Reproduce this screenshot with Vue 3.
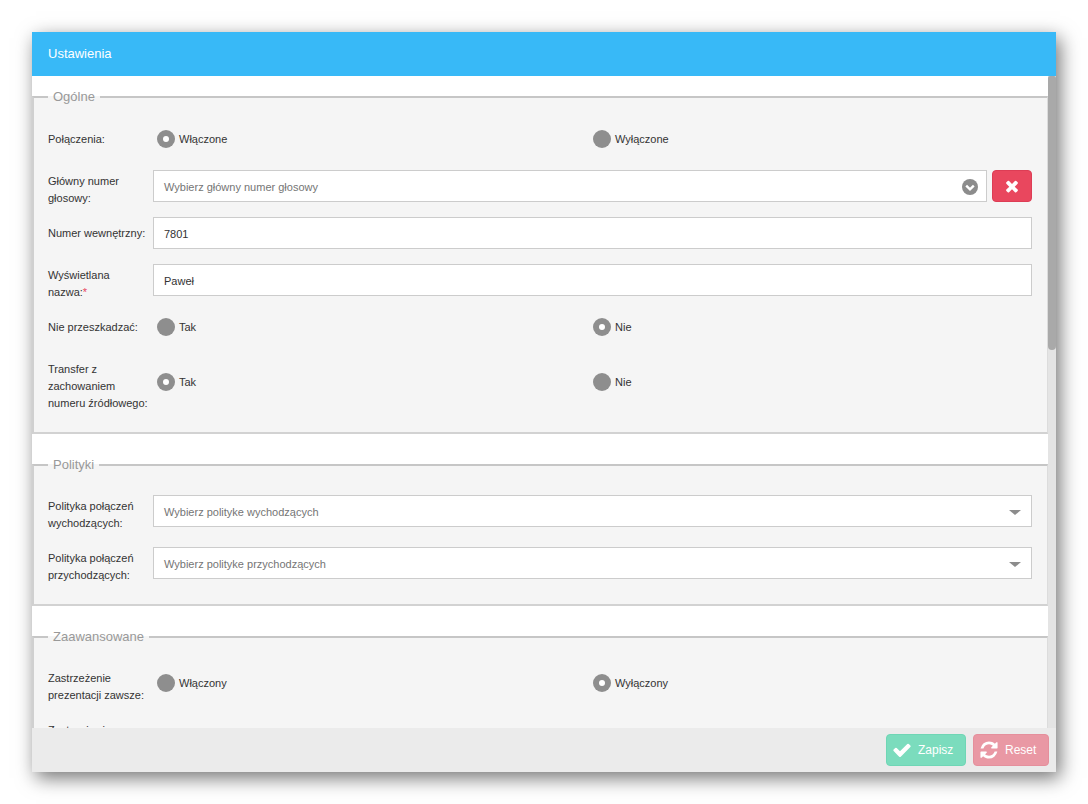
<script setup>
const check = 'M1671 566q0 40-28 68l-724 724-136 136q-28 28-68 28t-68-28l-136-136-362-362q-28-28-28-68t28-68l136-136q28-28 68-28t68 28l294 295 656-657q28-28 68-28t68 28l136 136q28 28 28 68z'
const times = 'M1298 1322q0 40-28 68l-136 136q-28 28-68 28t-68-28l-294-294-294 294q-28 28-68 28t-68-28l-136-136q-28-28-28-68t28-68l294-294-294-294q-28-28-28-68t28-68l136-136q28-28 68-28t68 28l294 294 294-294q28-28 68-28t68 28l136 136q28 28 28 68t-28 68l-294 294 294 294q28 28 28 68z'
const refresh = 'M1639 1056q0 5-1 7-64 268-268 434.5t-478 166.5q-146 0-282.5-55t-243.5-157l-129 129q-19 19-45 19t-45-19-19-45v-448q0-26 19-45t45-19h448q26 0 45 19t19 45-19 45l-137 137q71 66 161 102t187 36q134 0 250-65t186-179q11-17 53-117 8-23 30-23h192q13 0 22.5 9.5t9.5 22.5zm25-800v448q0 26-19 45t-45 19h-448q-26 0-45-19t-19-45 19-45l138-138q-148-137-349-137-134 0-250 65t-186 179q-11 17-53 117-8 23-30 23h-199q-13 0-22.5-9.5t-9.5-22.5v-7q65-268 270-434.5t480-166.5q146 0 284 55.5t245 156.5l130-129q19-19 45-19t45 19 19 45z'
</script>

<template>
  <div class="page">
    <section class="modal">
      <header class="head">Ustawienia</header>
      <div class="middle">
        <div class="body">
          <fieldset class="group">
            <legend>Ogólne</legend>
            <div class="row radio-row first">
              <div class="label one">Połączenia:</div>
              <div class="options">
                <label class="opt"><span class="dot on"></span>Włączone</label>
                <label class="opt"><span class="dot"></span>Wyłączone</label>
              </div>
            </div>
            <div class="row tight">
              <div class="label two">Główny numer głosowy:</div>
              <div class="field select">
                <span class="ph">Wybierz główny numer głosowy</span>
                <svg class="circ" viewBox="0 0 16 16" width="16" height="16" aria-hidden="true">
                  <circle cx="8" cy="8" r="8" fill="#8c8c8c" />
                  <path d="M4.2 6.6 8 10.4l3.8-3.8" fill="none" stroke="#fff" stroke-width="2.4" />
                </svg>
              </div>
              <button class="clear" type="button" aria-label="Wyczyść">
                <svg viewBox="0 0 1408 1792" width="14" height="18" aria-hidden="true"><path :d="times" fill="#fff" /></svg>
              </button>
            </div>
            <div class="row tight">
              <div class="label one-input">Numer wewnętrzny:</div>
              <div class="field">7801</div>
            </div>
            <div class="row tight">
              <div class="label two">Wyświetlana<br />nazwa:<span class="req">*</span></div>
              <div class="field">Paweł</div>
            </div>
            <div class="row radio-row second">
              <div class="label one">Nie przeszkadzać:</div>
              <div class="options">
                <label class="opt"><span class="dot"></span>Tak</label>
                <label class="opt"><span class="dot on"></span>Nie</label>
              </div>
            </div>
            <div class="row radio-row third">
              <div class="label three">Transfer z zachowaniem numeru źródłowego:</div>
              <div class="options drop12">
                <label class="opt"><span class="dot on"></span>Tak</label>
                <label class="opt"><span class="dot"></span>Nie</label>
              </div>
            </div>
          </fieldset>

          <fieldset class="group">
            <legend>Polityki</legend>
            <div class="row policy">
              <div class="label two">Polityka połączeń wychodzących:</div>
              <div class="field select">
                <span class="ph">Wybierz polityke wychodzących</span>
                <span class="caret"></span>
              </div>
            </div>
            <div class="row policy">
              <div class="label two">Polityka połączeń przychodzących:</div>
              <div class="field select">
                <span class="ph">Wybierz polityke przychodzących</span>
                <span class="caret"></span>
              </div>
            </div>
          </fieldset>

          <fieldset class="group last">
            <legend>Zaawansowane</legend>
            <div class="row policy adv">
              <div class="label two">Zastrzeżenie prezentacji zawsze:</div>
              <div class="options drop5">
                <label class="opt"><span class="dot"></span>Włączony</label>
                <label class="opt"><span class="dot on"></span>Wyłączony</label>
              </div>
            </div>
            <div class="row policy">
              <div class="label two">Zastrzeżenie prezentacji:</div>
            </div>
          </fieldset>
        </div>
        <div class="bar"><div class="thumb"></div></div>
      </div>
      <footer class="foot">
        <button class="btn save" type="button">
          <svg viewBox="0 0 1792 1792" width="20" height="20" aria-hidden="true"><path :d="check" fill="#fff" /></svg>
          Zapisz
        </button>
        <button class="btn reset" type="button">
          <svg viewBox="0 0 1792 1792" width="20" height="20" aria-hidden="true"><path :d="refresh" fill="#fff" /></svg>
          Reset
        </button>
      </footer>
    </section>
  </div>
</template>

<style scoped>
.page {
  height: 804px;
  box-sizing: border-box;
  padding: 32px;
  background: #fff;
  font-family: "Liberation Sans", Arial, sans-serif;
  font-size: 11px;
  color: #333;
}
.modal {
  height: 740px;
  display: flex;
  flex-direction: column;
  background: #fff;
  box-shadow: 4px 6px 18px rgba(0, 0, 0, 0.55);
}
.head {
  flex: 0 0 44px;
  line-height: 44px;
  padding-left: 16px;
  background: #38b9f7;
  color: #fff;
  font-size: 13px;
}
.middle {
  flex: 1;
  min-height: 0;
  display: flex;
}
.body {
  flex: 1;
  min-width: 0;
  overflow: hidden;
}
.bar {
  flex: 0 0 8px;
  background: #e4e4e4;
}
.thumb {
  height: 274px;
  background: #a9a9a9;
  border-radius: 2px 2px 4px 4px;
}
.group {
  margin: 0 0 23px;
  padding: 0 15px 0 14px;
  min-width: 0;
  background: #f5f5f5;
  border-style: solid;
  border-width: 2px 1px 2px 2px;
  border-color: #c6c6c6 #dcdcdc #d2d2d2 #d0d0d0;
  height: 345px;
  box-sizing: border-box;
}
.group:first-child { margin-top: 13px; }
.group:nth-child(2) { height: 149px; }
.group.last { height: 917px; margin-bottom: 0; }
legend {
  margin: 0;
  padding: 0 5px;
  font-size: 13px;
  line-height: 16px;
  color: #999;
}
.row { display: flex; align-items: flex-start; }
.label {
  flex: 0 0 105px;
  width: 105px;
  line-height: 17px;
}
.label.one { line-height: 18px; }
.label.one-input { padding-top: 8px; }
.label.two { padding-top: 3px; }
.row.first { margin-top: 25px; margin-bottom: 22px; }
.row.tight { height: 32px; margin-bottom: 15px; }
.row.second { margin-top: 22px; margin-bottom: 0; }
.row.third { margin-top: 25px; }
.row.policy { margin-bottom: 15px; }
.row.policy:first-of-type { margin-top: 22px; }
.req { color: #e8465d; }
.options {
  flex: 1;
  display: grid;
  grid-template-columns: 440px 1fr;
}
.drop12 { padding-top: 12px; }
.drop5 { padding-top: 7px; }
.opt {
  display: flex;
  align-items: center;
  height: 18px;
  gap: 4px;
}
.opt:first-child { padding-left: 4px; }
.dot {
  position: relative;
  flex: 0 0 18px;
  width: 18px;
  height: 18px;
  border-radius: 50%;
  background: #8e8e8e;
}
.dot.on::after {
  content: "";
  position: absolute;
  left: 6px;
  top: 6px;
  width: 6px;
  height: 6px;
  border-radius: 50%;
  background: #fff;
}
.field {
  flex: 1;
  min-width: 0;
  height: 32px;
  box-sizing: border-box;
  display: flex;
  align-items: center;
  padding: 2px 10px 0;
  background: #fff;
  border: 1px solid #ccc;
  color: #333;
}
.select { justify-content: space-between; }
.ph { color: #757575; }
.circ { margin-right: -2px; }
.caret {
  width: 0;
  height: 0;
  border-left: 6px solid transparent;
  border-right: 6px solid transparent;
  border-top: 5px solid #8c8c8c;
}
.clear {
  flex: 0 0 40px;
  height: 32px;
  margin-left: 5px;
  padding: 0;
  display: flex;
  align-items: center;
  justify-content: center;
  background: #e9475e;
  border: 1px solid #dd3d55;
  border-radius: 4px;
}
.foot {
  flex: 0 0 44px;
  box-sizing: border-box;
  display: flex;
  justify-content: flex-end;
  align-items: center;
  gap: 7px;
  padding-right: 7px;
  background: #ebebeb;
}
.btn {
  height: 32px;
  padding: 0 0 0 5px;
  display: flex;
  align-items: center;
  gap: 6px;
  border-radius: 4px;
  color: #fff;
  font-family: inherit;
  font-size: 12px;
}
.save {
  width: 80px;
  background: #7bdcbd;
  border: 1px solid #6fd6b5;
}
.reset {
  width: 76px;
  background: #e998a4;
  border: 1px solid #e58f9c;
}
</style>
